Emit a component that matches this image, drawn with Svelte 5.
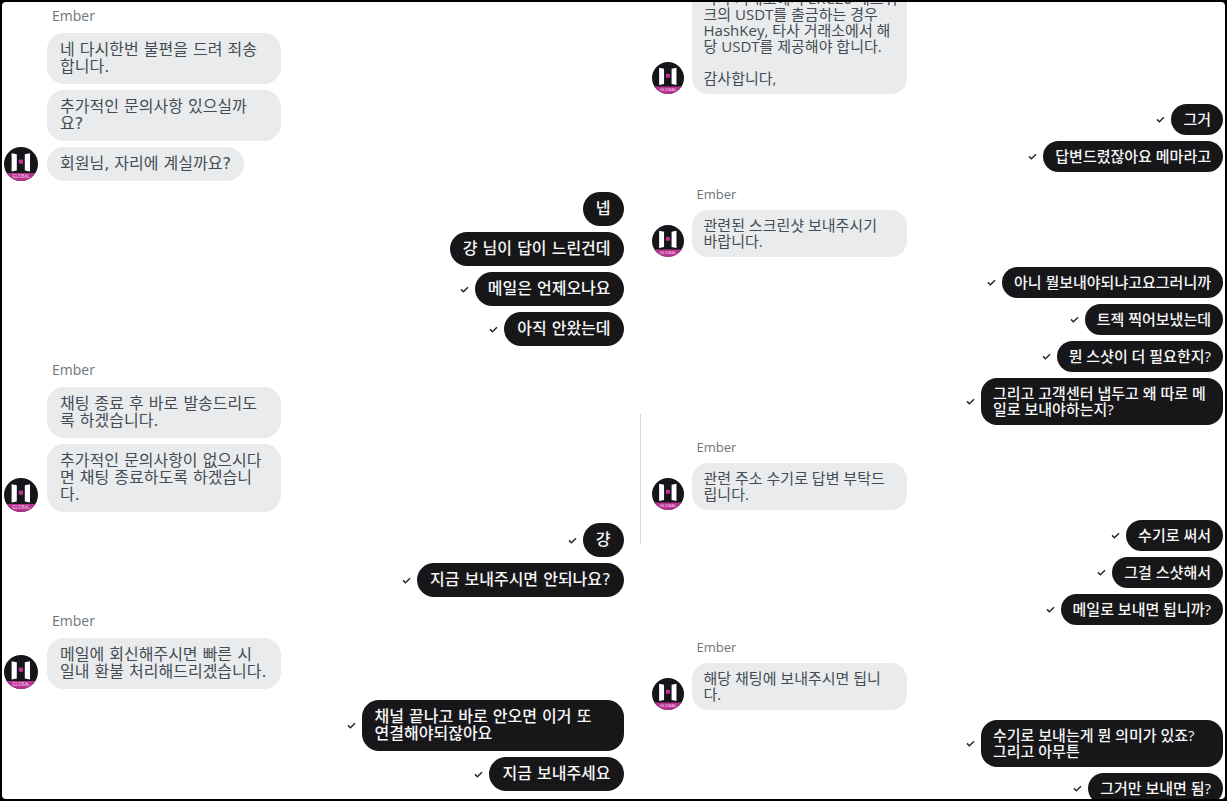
<script>
  const threads = [
    {
      size: "large",
      groups: [
        {
          from: "Ember",
          messages: [
            { text: "네 다시한번 불편을 드려 죄송\n합니다." },
            { text: "추가적인 문의사항 있으실까\n요?" },
            { text: "회원님, 자리에 계실까요?" },
          ],
        },
        {
          messages: [
            { text: "넵" },
            { text: "걍 님이 답이 느린건데" },
            { text: "메일은 언제오나요", read: true },
            { text: "아직 안왔는데", read: true },
          ],
        },
        {
          from: "Ember",
          messages: [
            { text: "채팅 종료 후 바로 발송드리도\n록 하겠습니다." },
            { text: "추가적인 문의사항이 없으시다\n면 채팅 종료하도록 하겠습니\n다." },
          ],
        },
        {
          messages: [
            { text: "걍", read: true },
            { text: "지금 보내주시면 안되나요?", read: true },
          ],
        },
        {
          from: "Ember",
          messages: [{ text: "메일에 회신해주시면 빠른 시\n일내 환불 처리해드리겠습니다." }],
        },
        {
          messages: [
            { text: "채널 끝나고 바로 안오면 이거 또\n연결해야되잖아요", read: true },
            { text: "지금 보내주세요", read: true },
          ],
        },
      ],
    },
    {
      size: "small",
      scrolled: true,
      groups: [
        {
          from: "Ember",
          hideName: true,
          messages: [
            { text: "타사 거래소에서 ERC20 네트워\n크의 USDT를 출금하는 경우\nHashKey, 타사 거래소에서 해\n당 USDT를 제공해야 합니다.\n\n감사합니다," },
          ],
        },
        {
          messages: [
            { text: "그거", read: true },
            { text: "답변드렸잖아요 메마라고", read: true },
          ],
        },
        {
          from: "Ember",
          messages: [{ text: "관련된 스크린샷 보내주시기\n바랍니다." }],
        },
        {
          messages: [
            { text: "아니 뭘보내야되냐고요그러니까", read: true },
            { text: "트젝 찍어보냈는데", read: true },
            { text: "뭔 스샷이 더 필요한지?", read: true },
            { text: "그리고 고객센터 냅두고 왜 따로 메\n일로 보내야하는지?", read: true },
          ],
        },
        {
          from: "Ember",
          messages: [{ text: "관련 주소 수기로 답변 부탁드\n립니다." }],
        },
        {
          messages: [
            { text: "수기로 써서", read: true },
            { text: "그걸 스샷해서", read: true },
            { text: "메일로 보내면 됩니까?", read: true },
          ],
        },
        {
          from: "Ember",
          messages: [{ text: "해당 채팅에 보내주시면 됩니\n다." }],
        },
        {
          messages: [
            { text: "수기로 보내는게 뭔 의미가 있죠?\n그리고 아무튼", read: true },
            { text: "그거만 보내면 됨?", read: true },
          ],
        },
      ],
    },
  ]
</script>

{#snippet avatar()}
  <svg class="avatar" viewBox="0 0 34 34" aria-hidden="true">
    <defs>
      <clipPath id="avatar-clip"><circle cx="17" cy="17" r="17" /></clipPath>
    </defs>
    <g clip-path="url(#avatar-clip)">
      <rect width="34" height="34" fill="#15161a" />
      <rect y="26" width="34" height="8" fill="#b83390" />
      <path d="M7.6 6.2l5.2 1v16.2l-5.2 1zM26 6.2l-5.2 1v16.2l5.2 1z" fill="#fff" />
      <rect x="14.8" y="12.5" width="4.2" height="4.2" rx="1" fill="#c92f95" />
      <text x="17" y="31" text-anchor="middle" font-size="4.5" font-weight="600" fill="#eebfe0">GLOBAL</text>
    </g>
  </svg>
{/snippet}

<main class="frame">
  {#each threads as thread, i}
    {#if i > 0}
      <div class="divider"></div>
    {/if}
    <section class="thread {thread.size}" class:scrolled={thread.scrolled}>
      {#each thread.groups as group}
        {#if group.from}
          <div class="group incoming">
            {@render avatar()}
            <div class="stack">
              {#if !group.hideName}
                <div class="name">{group.from}</div>
              {/if}
              {#each group.messages as message}
                <p class="bubble" class:multi={message.text.includes("\n")}>{message.text}</p>
              {/each}
            </div>
          </div>
        {:else}
          <div class="group outgoing">
            {#each group.messages as message}
              <div class="row">
                {#if message.read}
                  <svg class="check" viewBox="0 0 9 7" aria-hidden="true">
                    <path d="M1 3.4L3.4 5.7L8 1.2" />
                  </svg>
                {/if}
                <p class="bubble" class:multi={message.text.includes("\n")}>{message.text}</p>
              </div>
            {/each}
          </div>
        {/if}
      {/each}
    </section>
  {/each}
</main>

<style>
  :global(body) {
    background: #000;
  }

  .frame {
    display: grid;
    grid-template-columns: 12fr 1px 11fr;
    box-sizing: border-box;
    height: 100vh;
    overflow: hidden;
    border: 2px solid #000;
    border-radius: 6px;
    background: #fff;
    font-family: "Open Sans", "Noto Sans CJK KR", sans-serif;
  }

  .divider {
    align-self: center;
    height: 130px;
    margin-top: 152px;
    background: #d4d5d7;
  }

  .thread {
    display: flex;
    flex-direction: column;
    min-width: 0;
  }
  .large {
    --text: 16px;
    --line: 17px;
    --name: 14px;
    --name-gap: 9px;
    --avatar: 34px;
    --avatar-gap: 9px;
    --pad: 8px 13px 9px;
    --radius: 17px;
    --in-width: 234px;
    --out-width: 262px;
    --before-in: 15px;
    --before-out: 11px;
    padding: 5px 16px 0 2px;
  }
  .small {
    --text: 15px;
    --line: 16px;
    --name: 13px;
    --name-gap: 8px;
    --avatar: 32px;
    --avatar-gap: 8px;
    --pad: 7px 12px 8px;
    --radius: 16px;
    --in-width: 215px;
    --out-width: 242px;
    --before-in: 14px;
    --before-out: 10px;
    padding: 0 2px 0 11px;
  }
  .scrolled {
    margin-top: -19px;
  }

  .group {
    flex-shrink: 0;
  }
  .incoming {
    display: flex;
    align-items: flex-end;
    gap: var(--avatar-gap);
  }
  .outgoing + .incoming {
    margin-top: var(--before-in);
  }
  .incoming + .outgoing {
    margin-top: var(--before-out);
  }

  .avatar {
    flex-shrink: 0;
    width: var(--avatar);
    height: var(--avatar);
  }

  .stack,
  .outgoing {
    display: flex;
    flex-direction: column;
    gap: 6px;
  }
  .stack {
    align-items: flex-start;
  }
  .outgoing {
    align-items: flex-end;
  }

  .name {
    margin-bottom: calc(var(--name-gap) - 6px);
    padding-left: 5px;
    color: #70757b;
    font-size: var(--name);
    line-height: var(--line);
  }

  .row {
    display: flex;
    align-items: center;
    gap: 6px;
  }
  .check {
    width: 9px;
    height: 7px;
    fill: none;
    stroke: #26272a;
    stroke-width: 1.5;
  }

  .bubble {
    box-sizing: border-box;
    margin: 0;
    padding: var(--pad);
    border-radius: var(--radius);
    background: #e9ebed;
    color: #454b52;
    font-size: var(--text);
    line-height: var(--line);
    white-space: pre;
  }
  .large .bubble {
    font-family: "DejaVu Sans", "Noto Sans CJK KR", sans-serif;
  }
  .multi {
    width: var(--in-width);
  }
  .outgoing .bubble {
    background: #17171a;
    color: #f6f6f6;
    font-weight: 500;
  }
  .outgoing .multi {
    width: var(--out-width);
  }
</style>
